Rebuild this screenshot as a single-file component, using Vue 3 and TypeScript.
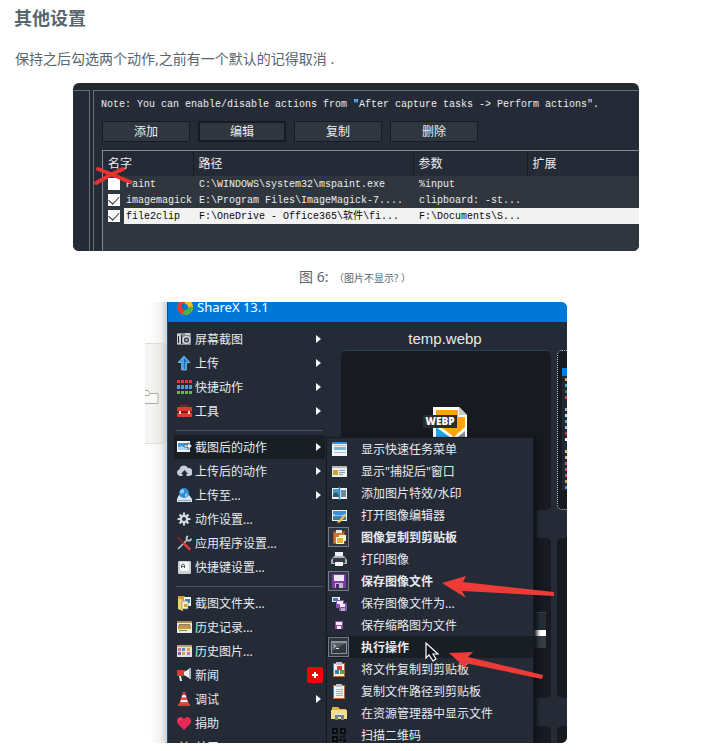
<script setup lang="ts">
import { reactive } from 'vue'

interface ActionRow {
  checked: boolean
  name: string
  path: string
  args: string
  selected?: boolean
}

interface MenuItem {
  label: string
  icon: string
  arrow?: boolean
  active?: boolean
  checked?: boolean
  badge?: boolean
  divider?: boolean
}

const tools: string[] = ['添加', '编辑', '复制', '删除']
const headers: string[] = ['名字', '路径', '参数', '扩展']

const rows = reactive<ActionRow[]>([
  { checked: false, name: 'Paint', path: 'C:\\WINDOWS\\system32\\mspaint.exe', args: '%input' },
  { checked: true, name: 'imagemagick', path: 'E:\\Program Files\\ImageMagick-7....', args: 'clipboard: -st...' },
  { checked: true, name: 'file2clip', path: 'F:\\OneDrive - Office365\\软件\\fi...', args: 'F:\\Documents\\S...', selected: true },
])

const mainMenu: MenuItem[] = [
  { label: '屏幕截图', icon: 'camera', arrow: true },
  { label: '上传', icon: 'up', arrow: true },
  { label: '快捷动作', icon: 'grid', arrow: true },
  { label: '工具', icon: 'toolbox', arrow: true },
  { label: '截图后的动作', icon: 'after', arrow: true, active: true, divider: true },
  { label: '上传后的动作', icon: 'cloud', arrow: true },
  { label: '上传至...', icon: 'drive', arrow: true },
  { label: '动作设置...', icon: 'gear' },
  { label: '应用程序设置...', icon: 'wrench' },
  { label: '快捷键设置...', icon: 'key' },
  { label: '截图文件夹...', icon: 'folderShots', divider: true },
  { label: '历史记录...', icon: 'history' },
  { label: '历史图片...', icon: 'gallery' },
  { label: '新闻', icon: 'horn', badge: true },
  { label: '调试', icon: 'cone', arrow: true },
  { label: '捐助', icon: 'heart' },
  { label: '关于...', icon: 'crown' },
]

const taskMenu: MenuItem[] = [
  { label: '显示快速任务菜单', icon: 'list' },
  { label: '显示"捕捉后"窗口', icon: 'form' },
  { label: '添加图片特效/水印', icon: 'effects' },
  { label: '打开图像编辑器', icon: 'editor' },
  { label: '图像复制到剪贴板', icon: 'paste', checked: true },
  { label: '打印图像', icon: 'printer' },
  { label: '保存图像文件', icon: 'save', checked: true },
  { label: '保存图像文件为...', icon: 'saveAs' },
  { label: '保存缩略图为文件', icon: 'saveSmall' },
  { label: '执行操作', icon: 'terminal', checked: true, active: true },
  { label: '将文件复制到剪贴板', icon: 'clipFile' },
  { label: '复制文件路径到剪贴板', icon: 'clipText' },
  { label: '在资源管理器中显示文件', icon: 'explorer' },
  { label: '扫描二维码', icon: 'qr' },
]

const icons: Record<string, string> = {
  camera: '<path fill="#858b92" d="M1 2h14v12H1z"/><path fill="#c9cdd2" d="M1 3h4v10H1zM9 2h5v2H9z"/><path fill="#23272e" d="M2 5h1v7H2zM5 4h1v9H5z"/><circle cx="10.500" cy="9" r="4" fill="#dfe3e8"/><circle cx="10.500" cy="9" r="2.700" fill="#3f4650"/><circle cx="10.500" cy="9" r="1.200" fill="#a6b5ca"/>',
  up: '<path fill="#3fa2ea" stroke="#a9d6f7" stroke-width=".6" d="M8 1l6 6.500h-3.600V15H5.600V7.500H2z"/><path fill="#1c6fc0" d="M8 3l3.500 4H9v7H8z"/>',
  grid: '<path fill="#e53c3c" d="M1 1h3v3H1zM5 1h3v3H5zM9 1h3v3H9zM13 1h3v3h-3z"/><path fill="#36a5e4" d="M1 6h3v4H1zM5 6h3v4H5zM9 6h3v4H9zM13 6h3v4h-3z"/><path fill="#5cc040" d="M1 12h3v3H1zM5 12h3v3H5zM9 12h3v3H9zM13 12h3v3h-3z"/>',
  toolbox: '<path fill="none" stroke="#9b1c1c" stroke-width="1.500" d="M5 5V2.500h6V5"/><rect x="1" y="4" width="15" height="10" rx="1" fill="#e13a34"/><path fill="#8f1414" d="M1 8h15v2H1z"/><path fill="#f4e2c2" d="M3 8h2v3H3zM12 8h2v3h-2z"/>',
  after: '<rect x="1" y="2" width="13" height="11" fill="#f3f7fb"/><path fill="#3d94d8" d="M2 4h11v7H2z"/><path fill="#a8d5f0" d="M2 8l4-1 6 2v2H2z"/><path fill="#fff" stroke="#3a5268" stroke-width=".7" d="M8 6h4V3.500L16 7l-4 3.500V8H8z"/>',
  cloud: '<path fill="#c9cede" d="M4 13a3.500 3.500 0 0 1-.5-6.800A4.500 4.500 0 0 1 12 5a4 4 0 0 1 1 8h-2.500v-2H12L8.500 7 5 11h1.500v2z"/>',
  drive: '<path fill="#d8e6f2" d="M3 8h10l3 4v3H1v-3z"/><path fill="#8fa6bc" d="M2 13h13v1H2z"/><circle cx="8" cy="6" r="5" fill="#318bd0"/><path fill="#8cd0f5" d="M5 3c2-2 4 0 3 2S4 7 4 5zM9 7l3-1-1 3-2 1z"/>',
  gear: '<path stroke="#d4d9df" stroke-width="2.200" d="M8 1.500v13M1.500 8h13M3.500 3.500l9 9M12.500 3.500l-9 9"/><circle cx="8" cy="8" r="4.300" fill="#d4d9df"/><circle cx="8" cy="8" r="2" fill="#252b36"/>',
  wrench: '<path stroke="#bcc4cd" stroke-width="1.600" d="M2 14l9-9"/><path fill="none" stroke="#c6ced7" stroke-width="1.800" d="M12 1c-2 1-2 4 0 4.500s3-.5 3-2"/><path stroke="#9b2222" stroke-width="1.500" d="M1.500 2l7 7"/><path stroke="#e33838" stroke-width="2.500" stroke-linecap="round" d="M8.500 9l5 5"/>',
  key: '<rect x="2" y="2" width="13" height="13" rx="1" fill="#cbd0d6"/><rect x="4" y="3" width="9" height="9" rx="1" fill="#f4f5f6"/><path fill="none" stroke="#555c66" d="M5.500 9V6q1.500-2 3 0v3M5.500 7.500h3"/>',
  folderShots: '<path fill="#d69b25" d="M2 1h6l2 2v11H2z"/><path fill="#f3d268" d="M2 3l5 2v11l-5-2z"/><path fill="#f4f6f6" d="M8 2h7v9H8z"/><path fill="#3f84bf" d="M9 4h5v4H9z"/><path fill="#fff2b5" stroke="#6a7b80" stroke-width=".6" d="M6 6h6v8H6z"/><path fill="#cda52f" d="M8 9h3v3H8z"/>',
  history: '<path fill="#e9ebed" d="M1 2h15v12H1z"/><path fill="#a68f57" d="M1 2h15v2H1z"/><path fill="#c49a32" d="M2 6h13v4H2z"/><path stroke="#89805f" d="M3 5.500h11M3 11.500h8"/>',
  gallery: '<path fill="#dfe3e7" d="M1 2h15v12H1z"/><path fill="#b4a176" d="M1 2h15v2H1z"/><path fill="#ca71a0" d="M2 5h3v3H2zM11 9h3v3h-3z"/><path fill="#5b8ec6" d="M6 5h3v3H6z"/><path fill="#d9a83d" d="M11 5h3v3h-3zM6 9h3v3H6z"/><path fill="#905ba5" d="M2 9h3v3H2z"/>',
  horn: '<path fill="#db3a34" d="M1 3h8v6H1z"/><path fill="#eceff2" d="M8 5l5-3v9L8 8z"/><path fill="#abb4be" d="M13 1h2v11h-2z"/><path fill="#e9edf0" d="M3 9h2l1 5H4z"/>',
  cone: '<path fill="#e44843" d="M7 1h2l4 12H3z"/><path fill="#f4f5f6" d="M6.400 4h3.200l.8 2.500H5.600zM5 9h6l.8 2H4.400z"/><path fill="#df3b34" d="M2 13h12v2H2z"/>',
  heart: '<path fill="#e72854" d="M8 15L2 9C-1 5 3 0 7 3l1 1 1-1c4-3 8 2 5 6z"/><path fill="#f58198" d="M3 7c-1-3 2-4 3-3-2 0-3 1-3 3z"/>',
  crown: '<path fill="#d8b72c" d="M1 4l3 2 1-4 3 3 3-3 1 4 3-2-1 10H2z"/>',
  list: '<path fill="#f4f7fa" d="M1 2h15v13H1z"/><path fill="#348bd0" d="M1 1h15v2H1z"/><path fill="#77b4df" d="M3 6h12v3H3z"/><path stroke="#afb8c1" d="M3 4.500h12M3 11.500h12"/>',
  form: '<path fill="#eceff1" d="M1 3h15v11H1z"/><path fill="#b1b5b9" d="M1 3h15v2H1z"/><path fill="#c6a829" d="M2 7h5v5H2z"/><path stroke="#949b9f" d="M8 7.500h6M8 9.500h6M8 11.500h4"/>',
  effects: '<path fill="#f1f5f8" d="M1 3h15v11H1z"/><path fill="#4b99cf" d="M2 4h6v8H2z"/><path fill="#315d68" d="M2 9l3-2 3 3v2H2z"/><path fill="#71899a" d="M10 5h5v7h-5z"/><path stroke="#258de0" stroke-width="1.500" d="M8.500 2v13"/>',
  editor: '<path fill="#f0f4f7" d="M1 3h15v11H1z"/><path fill="#3792d4" d="M2 4h13v9H2z"/><path fill="#b7dfe8" d="M2 7q5 3 13 0v2H2z"/><path fill="#3f8173" d="M2 10q5-1 13 1v2H2z"/><path stroke="#efbd37" stroke-width="2.200" d="M8 15l6-7"/><path fill="#efd9a0" d="M7 14l2 1-3 1z"/>',
  paste: '<path fill="#99501d" d="M2 2h12v13H2z"/><path fill="#d0752e" d="M3 4h10v10H3z"/><path fill="#e2e5e8" d="M5 1h6v3H5z"/><path fill="#f7f3df" d="M8 6h7v6H8z"/><path fill="#e2b434" stroke="#fff" stroke-width="1" d="M5.500 8.500h7v6h-7z"/>',
  printer: '<path fill="#edf1f5" d="M4 1h8v6H4z"/><path fill="#aab0b7" d="M3 5h10l3 4v4H0V9z"/><path fill="#363b42" d="M2 7h12v5H2z"/><path fill="#f4f6f9" d="M4 11h8v4H4z"/>',
  save: '<path fill="#7c3ca0" d="M1 1h14v14H1z"/><path fill="#ede8f3" d="M3 2h10v6H3z"/><path fill="#bbbac9" d="M4 10h8v5H4z"/><path fill="#54286e" d="M5 11h3v4H5z"/>',
  saveAs: '<path fill="#e9eef4" d="M1 2h8v5H1z"/><path fill="#3583c7" d="M2 3h5v3H2z"/><path fill="#8850ad" d="M5 5h8v8H5zM8 8h8v8H8z"/><path fill="#f2edf6" d="M6 6h6v3H6zM9 9h5v3H9z"/><path fill="#b9aec6" d="M10 13h4v3h-4z"/>',
  saveSmall: '<path fill="#914eac" d="M4 4h8v8H4z"/><path fill="#f4eef7" d="M5 5h6v3H5zM6 9h4v3H6z"/>',
  terminal: '<path fill="#8d939b" d="M0 2h16v13H0z"/><path fill="#32373d" d="M1 4h14v10H1z"/><path fill="#575d64" d="M1 4h14L1 12z"/><path fill="none" stroke="#e0e4e8" d="M2.500 5.500l2 1.500-2 1.500M5 9.500h3"/>',
  clipFile: '<path fill="#b36932" d="M2 2h12v14H2z"/><path fill="#f2f4f2" d="M3 3h10v12H3z"/><path fill="#bec4ca" d="M5 1h6v3H5z"/><path fill="#db3f3d" d="M6 5h5v4H6z"/><path fill="#3579c1" d="M4 9h4v4H4z"/><path fill="#4ca544" d="M9 9h4v4H9z"/>',
  clipText: '<path fill="#b36932" d="M2 2h12v14H2z"/><path fill="#f2f4f2" d="M3 3h10v12H3z"/><path fill="#bec4ca" d="M5 1h6v3H5z"/><path stroke="#a3b1b0" d="M5 6.500h7M5 8.500h7M5 10.500h7M5 12.500h7"/>',
  explorer: '<path fill="#e4b345" d="M1 2h6l2 2h6v10H1z"/><path fill="#f4dc89" d="M0 5h16v9H0z"/><path fill="#73828b" d="M4 9h9v6h-3v-3H7v3H4z"/><path fill="#d6e1e6" d="M4 8h9v2H4z"/>',
  qr: '<path fill="#0b0d10" d="M1 1h6v6H1zM9 1h6v6H9zM1 9h6v6H1zM9 9h2v2H9zM12 8h2v3h-2zM8 12h3v2H8zM12 12h3v3h-3z"/><path fill="#343a43" d="M3 3h2v2H3zM11 3h2v2h-2zM3 11h2v2H3z"/>',
}

const stripeColors: string[] = ['#d8ad67', '#43a9d1', '#348a4a', '#d84343', '#242b35', '#9eb2c4', '#d4d8dd', '#55aec9', '#bcc4cb', '#a83d3d', '#f0f0f0', '#242b35', '#e2c66b', '#d5bd7f', '#bf5481', '#dc4d4d', '#d84374', '#c7a73f', '#3da4cb']
</script>

<template>
  <main class="article">
    <h2>其他设置</h2>
    <p class="intro">保持之后勾选两个动作,之前有一个默认的记得取消 .</p>

    <figure class="shot actions">
      <div class="side-pane"></div>
      <section class="pane">
        <p class="note">Note: You can enable/disable actions from "After capture tasks -&gt; Perform actions".</p>
        <div class="tools">
          <button v-for="tool in tools" :key="tool" type="button" :class="{ focused: tool === '编辑' }">{{ tool }}</button>
        </div>
        <div class="list">
          <table>
            <colgroup><col class="c-name"><col class="c-path"><col class="c-args"><col></colgroup>
            <thead>
              <tr><th v-for="head in headers" :key="head" scope="col">{{ head }}</th></tr>
            </thead>
            <tbody>
              <tr v-for="row in rows" :key="row.name" :class="{ selected: row.selected }">
                <td class="name">
                  <label><input v-model="row.checked" type="checkbox"><span>{{ row.name }}</span></label>
                </td>
                <td>{{ row.path }}</td>
                <td>{{ row.args }}</td>
                <td></td>
              </tr>
            </tbody>
          </table>
        </div>
      </section>
      <svg class="cross" viewBox="0 0 42 20" aria-hidden="true">
        <path d="M5 3q13 5 32 13M3 17q13-8 27-14" fill="none" stroke="#e8322f" stroke-width="4" stroke-linecap="round" />
      </svg>
    </figure>

    <p class="caption">图 6: <small>（图片不显示? ）</small></p>

    <figure class="shot sharex">
      <div class="desk">
        <div class="desk-band">
          <svg viewBox="0 0 14 14" aria-hidden="true"><path d="M-2 .5h5l2 3h8v10H-2M-2 5.500h6l1-2" fill="#f8f8f6" stroke="#a9a9a5" /></svg>
        </div>
      </div>
      <section class="window">
        <header class="titlebar">
          <svg viewBox="0 0 16 16" aria-hidden="true">
            <path fill="#e13e32" d="M8 0a8 8 0 0 0-8 8l5 2a3 3 0 0 1 3-5z" /><path fill="#ffb51b" d="M8 16a8 8 0 0 0 8-9l-5-1a3 3 0 0 1-3 5z" /><path fill="#e13e32" d="M0 7a8 8 0 0 0 7 9l2-5a4 4 0 0 1-4-4z" /><path fill="#48b53c" d="M5 15a8 8 0 0 0 11-7l-5-1a3 3 0 0 1-3 4z" /><path fill="#ffb51b" d="M8 0a8 8 0 0 1 8 8h-5a3 3 0 0 0-3-3z" />
          </svg>
          <span>ShareX 13.1</span>
        </header>
        <div class="work">
          <nav class="menu main-menu">
            <template v-for="item in mainMenu" :key="item.label">
              <hr v-if="item.divider">
              <button type="button" :class="{ active: item.active }">
                <svg class="icon" viewBox="0 0 16 16" aria-hidden="true" v-html="icons[item.icon]"></svg>
                <span class="text">{{ item.label }}</span>
                <svg v-if="item.arrow" class="arrow" viewBox="0 0 5 8" aria-hidden="true"><path d="M0 0l5 4-5 4z" fill="#f4f5f7" /></svg>
                <svg v-if="item.badge" class="badge" viewBox="0 0 16 16" aria-hidden="true"><rect width="16" height="16" rx="2" fill="#e90909" /><path d="M8 5v6M5 8h6" stroke="#fff" stroke-width="2" /></svg>
              </button>
            </template>
          </nav>
          <div class="gallery">
            <h3>temp.webp</h3>
            <div class="tiles">
              <div class="tile first">
                <svg class="webp" viewBox="0 0 44 46" aria-hidden="true">
                  <path fill="#fff" d="M10 0h26l8 8v38H10z" /><path fill="#c6ccd2" d="M36 0l8 8h-8z" /><path fill="#ffa50a" d="M13 3h22v7h7v10L31 30 13 16z" /><path fill="#20a4e8" d="M13 20l15 11v15H13z" /><path fill="#858a8e" d="M42 24L30 34v12h12z" />
                  <rect y="8" width="34" height="13" fill="#2c2d2f" /><text x="17" y="18" text-anchor="middle" font-size="10" font-weight="800" fill="#fff">WEBP</text>
                </svg>
              </div>
              <div class="tile picked">
                <div class="thumb">
                  <i v-for="(color, i) in stripeColors" :key="i" :style="{ background: color }"></i>
                </div>
              </div>
              <div class="tile"><div class="clip-panel"></div></div>
              <div class="tile"></div>
              <div class="tile"></div>
              <div class="tile"></div>
            </div>
          </div>
          <nav class="menu task-menu">
            <button v-for="item in taskMenu" :key="item.label" type="button" :class="{ active: item.active, checked: item.checked }">
              <span class="slot"><svg class="icon" viewBox="0 0 16 16" aria-hidden="true" v-html="icons[item.icon]"></svg></span>
              <span class="text">{{ item.label }}</span>
            </button>
          </nav>
        </div>
      </section>
      <svg class="marks" viewBox="0 0 422 441" aria-hidden="true">
        <path fill="#ef3b37" d="M297 281l24-7-3 6 91 10v4l-92-5 4 7zM304 351l24-1-5 5 75 18-1 4-77-16 3 7z" />
        <path fill="#11151b" stroke="#fff" stroke-width="1.200" d="M281 341v15l3-3 4 6 3-2-3-5h5z" />
      </svg>
    </figure>
  </main>
</template>

<style>
body {
  background: #fff;
}
</style>

<style scoped>
* {
  box-sizing: border-box;
}

.article {
  padding: 4px 14px 8px;
  color: #57666e;
  font-family: "Noto Sans", "Noto Sans CJK SC", sans-serif;
}

h2 {
  margin: 0;
  font-size: 18px;
  line-height: 28px;
}

.intro {
  margin: 16px 0 14px 1px;
  font-size: 14px;
  line-height: 21px;
}

.shot {
  position: relative;
  display: flex;
  width: 100%;
  margin: 0 auto;
  overflow: hidden;
  border-radius: 6px;
}

button {
  margin: 0;
  padding: 0;
  border: 0;
  background: none;
  color: inherit;
  font: inherit;
}

.actions {
  max-width: 566px;
  gap: 3px;
  padding-top: 7px;
  background: #232a2d;
  color: #eceef2;
}

.side-pane {
  flex: 0 0 17px;
  border-top: 1px solid #6a6d7c;
  border-right: 1px solid #6a6d7c;
  background: #252a37;
}

.pane {
  flex: 1;
  min-width: 0;
  padding: 6px 0 0 8px;
  border-top: 1px solid #6a6d7c;
  border-left: 1px solid #6a6d7c;
  background: #252a37;
}

.note {
  margin: 0 0 0 -1px;
  font: 10px/16px "Liberation Mono", monospace;
  white-space: nowrap;
}

.tools {
  display: flex;
  gap: 8px;
  margin: 8px 0;
}

.tools button {
  width: 88px;
  height: 21px;
  border: 1px solid #161b25;
  background: #30363e;
  font-size: 12px;
  line-height: 18px;
}

.tools .focused {
  border-width: 2px;
  line-height: 16px;
}

.list {
  padding-bottom: 27px;
  border-top: 1px solid #858994;
  border-left: 1px solid #858994;
  background: #30363e;
}

table {
  width: 100%;
  border-collapse: collapse;
  table-layout: fixed;
}

.c-name {
  width: 90px;
}

.c-path {
  width: 220px;
}

.c-args {
  width: 114px;
}

th {
  height: 25px;
  padding: 0 5px;
  border-right: 1px solid #151a24;
  background: #252b36;
  font-size: 12px;
  font-weight: 400;
  line-height: 24px;
  text-align: left;
}

th:last-child {
  border-right: 0;
}

td {
  height: 16px;
  padding: 1px 0 0 6px;
  font: 10px/15px "Liberation Mono", "Noto Sans CJK SC", monospace;
  white-space: nowrap;
}

.name {
  padding: 0;
}

label {
  display: flex;
  align-items: center;
  gap: 4px;
  padding-left: 5px;
}

label span {
  flex: 1;
  padding: 1px 0 0 2px;
}

.selected td {
  background: #f2f2f3;
  color: #080808;
}

.selected .name {
  background: none;
}

.selected span {
  background: #f2f2f3;
}

input {
  display: grid;
  place-items: center;
  flex: none;
  width: 12px;
  height: 12px;
  margin: 0;
  appearance: none;
  background: #fff;
}

input:checked::before {
  content: "";
  width: 9px;
  height: 5px;
  margin-bottom: 3px;
  border-bottom: 1px solid #333;
  border-left: 1px solid #333;
  transform: rotate(-45deg);
}

.cross {
  position: absolute;
  top: 83px;
  left: 20px;
  width: 42px;
  height: 20px;
}

.caption {
  margin: 15px 0 13px;
  padding-right: 2px;
  font-size: 14px;
  line-height: 21px;
  text-align: center;
}

small {
  margin-left: 2px;
  font-size: 10px;
}

.sharex {
  max-width: 422px;
  aspect-ratio: 422 / 441;
  background: #fff;
  color: #e7eaef;
}

.desk {
  flex: 0 0 22px;
  padding-top: 41px;
  background: linear-gradient(90deg, #fff 20%, #f2f2f2 70%, #cfd1d2);
}

.desk-band {
  height: 101px;
  padding-top: 46px;
  border-top: 1px solid #dcdcda;
  border-bottom: 1px solid #dcdcda;
  background: linear-gradient(90deg, #f5f5f3 30%, #e9e9e8 70%, #c8cacb);
}

.desk-band svg {
  display: block;
  width: 14px;
  height: 14px;
}

.window {
  display: flex;
  flex: 1;
  flex-direction: column;
  min-width: 0;
  border-left: 1px solid #0f5489;
  background: #252b36;
}

.titlebar {
  display: flex;
  flex: none;
  align-items: center;
  gap: 4px;
  height: 30px;
  margin-top: -10px;
  padding: 0 9px;
  background: #0078d7;
  color: #fff;
  font-size: 13px;
  line-height: 16px;
}

.titlebar svg {
  width: 16px;
  height: 16px;
}

.work {
  position: relative;
  display: flex;
  flex: 1;
  min-height: 0;
}

.menu button {
  display: flex;
  align-items: center;
  width: 100%;
  font-size: 12px;
  text-align: left;
  white-space: nowrap;
}

.icon {
  flex: none;
  width: 16px;
  height: 16px;
}

.menu .active {
  background: #191e25;
}

.main-menu {
  flex: 0 0 158px;
  padding: 5px 1px 0 6px;
}

.main-menu button {
  height: 24px;
  gap: 3px;
  padding: 0 4px 0 2px;
}

.main-menu .text {
  flex: 1;
}

hr {
  height: 1px;
  margin: 7px 2px 4px;
  border: 0;
  background: #4b515c;
}

.arrow {
  width: 5px;
  height: 8px;
}

.badge {
  width: 16px;
  height: 16px;
  margin-right: -2px;
}

.gallery {
  flex: 1;
  min-width: 0;
  padding: 6px 0 0 15px;
}

h3 {
  width: 208px;
  margin: 0;
  font: 15px/22px "Liberation Sans", sans-serif;
  text-align: center;
}

.tiles {
  display: grid;
  grid-template-columns: 210px 210px;
  grid-auto-rows: 160px;
  gap: 28px 6px;
}

.tile {
  border-radius: 5px;
  background: #171a21;
}

.first {
  padding: 56px 0 0 82px;
  border-top: 1px solid #253f57;
}

.webp {
  display: block;
  width: 44px;
  height: 46px;
  font-family: "Open Sans", sans-serif;
}

.picked {
  padding: 17px 4px;
  border: 1px dotted #c5cad0;
}

.thumb {
  display: flex;
  flex-direction: column;
  gap: 3px;
  height: 122px;
  padding: 2px 0 0 3px;
  border-top: 8px solid #087ad5;
  background: #202833;
}

.thumb i {
  flex: 0 0 3px;
  width: 4px;
}

.clip-panel {
  width: 205px;
  height: 36px;
  margin-top: 74px;
  border-top: 1px solid #3b424b;
  background: linear-gradient(#252c35 50%, #fff 50% 67%, #343c44 67%);
}

.task-menu {
  position: absolute;
  top: 115px;
  left: 158px;
  width: 208px;
  border: 1px solid #151a21;
  background: #252b36;
  box-shadow: 3px 2px 4px #0f131a;
}

.task-menu button {
  height: 22px;
  gap: 12px;
  padding-left: 1px;
}

.slot {
  display: grid;
  place-items: center;
  flex: none;
  width: 21px;
  height: 20px;
}

.menu .checked {
  font-weight: 700;
}

.checked .slot {
  border: 1px solid #727b88;
  background: #303641;
}

.marks {
  position: absolute;
  inset: 0;
  width: 100%;
  height: 100%;
}
</style>
